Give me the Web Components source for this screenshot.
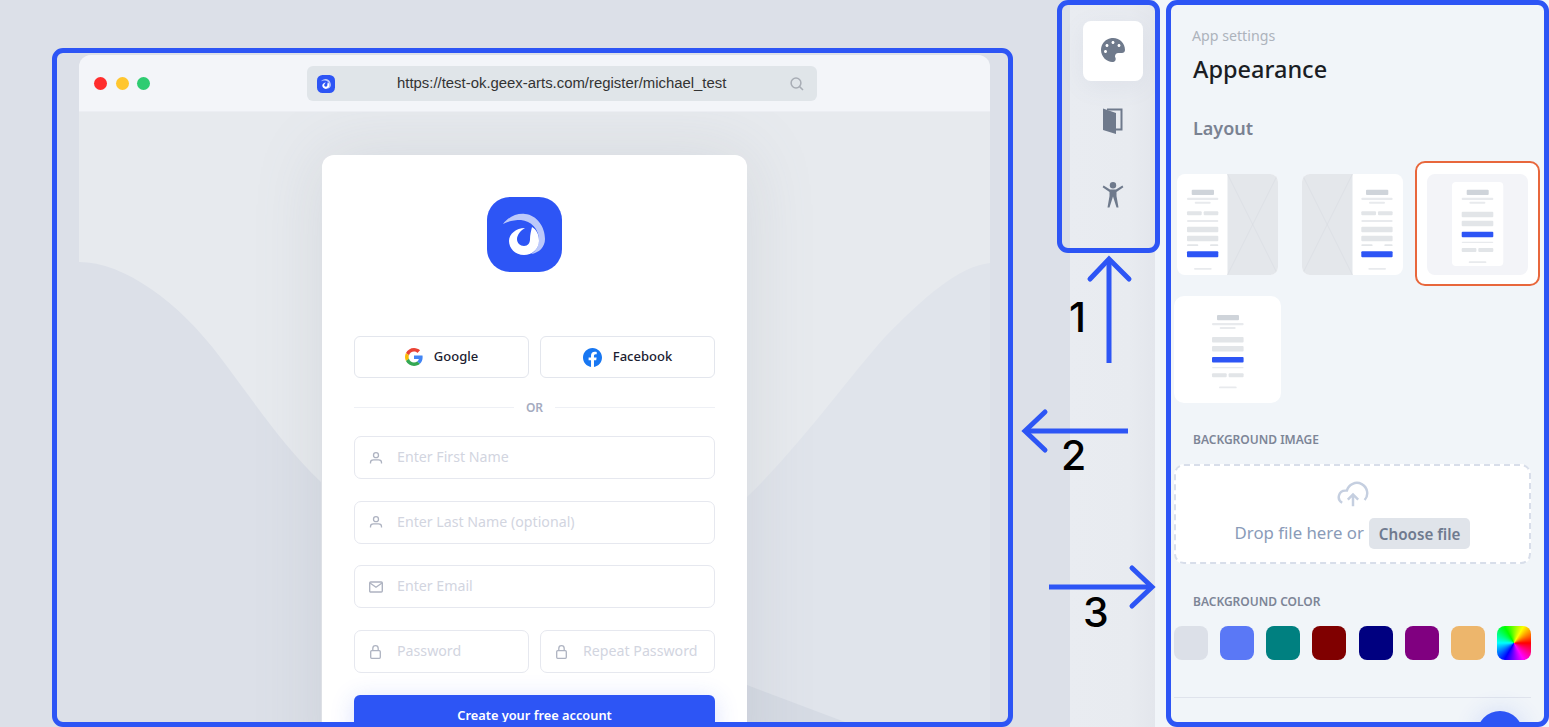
<!DOCTYPE html>
<html>
<head>
<meta charset="utf-8">
<title>Appearance settings</title>
<style>
  html, body { margin: 0; height: 100%; }
  body {
    overflow: hidden;
    position: relative;
    display: flex;
    height: 727px;
    font-family: "Noto Sans", sans-serif;
  }
</style>
</head>
<body>
<preview-stage>
  <browser-window url="https://test-ok.geex-arts.com/register/michael_test">
    <register-card></register-card>
  </browser-window>
</preview-stage>
<side-rail></side-rail>
<settings-panel></settings-panel>
<annotation-layer></annotation-layer>

<script>
const ICONS = {
  user: '<svg width="14" height="14" viewBox="0 0 14 14" fill="none" stroke="currentColor" stroke-width="1.3"><circle cx="7" cy="4.2" r="2.5"/><path d="M1.5 12.6v-1.1c0-1.6 1.6-2.6 3-2.6h5c1.4 0 3 1 3 2.6v1.1"/></svg>',
  mail: '<svg width="14" height="12" viewBox="0 0 14 12" fill="none" stroke="currentColor" stroke-width="1.4"><rect x=".7" y="1" width="12.6" height="10" rx="1"/><path d="M1 2l6 4.2L13 2"/></svg>',
  lock: '<svg width="11" height="14" viewBox="0 0 11 14" fill="none" stroke="currentColor" stroke-width="1.3"><rect x=".7" y="5.7" width="9.6" height="7.6" rx="1"/><path d="M2.8 5.7V3.4a2.7 2.7 0 015.4 0v2.3"/></svg>',
  google: '<svg width="18" height="18" viewBox="0 0 48 48"><path fill="#EA4335" d="M24 9.5c3.5 0 6.7 1.2 9.2 3.6l6.9-6.9C35.9 2.4 30.5 0 24 0 14.6 0 6.5 5.4 2.6 13.2l8 6.2C12.4 13.7 17.700 9.500 24 9.500z"/><path fill="#4285F4" d="M47 24.600c0-1.600-.1-3.100-.4-4.600H24v9.100h12.900c-.6 3-2.300 5.500-4.800 7.200l7.700 6C44.300 38 47 31.900 47 24.600z"/><path fill="#FBBC05" d="M10.500 28.600c-.5-1.400-.8-3-.8-4.600s.3-3.200.8-4.600l-8-6.200C.9 16.500 0 20.100 0 24s.9 7.500 2.600 10.800l7.900-6.200z"/><path fill="#34A853" d="M24 48c6.500 0 11.900-2.100 15.900-5.800l-7.700-6c-2.200 1.500-4.900 2.300-8.200 2.300-6.300 0-11.600-4.200-13.500-9.900l-8 6.200C6.500 42.600 14.600 48 24 48z"/></svg>',
  facebook: '<svg width="19" height="19" viewBox="0 0 24 24"><path fill="#1877F2" d="M24 12.070C24 5.400 18.630 0 12 0S0 5.400 0 12.070c0 6.030 4.390 11.020 10.130 11.930v-8.440H7.080v-3.490h3.050V9.410c0-3.020 1.790-4.690 4.530-4.690 1.310 0 2.680.24 2.680.24v2.970h-1.510c-1.490 0-1.960.93-1.960 1.880v2.260h3.330l-.53 3.490h-2.800V24C19.610 23.090 24 18.100 24 12.070z"/></svg>'
};

class SwirlLogo extends HTMLElement {
  connectedCallback() {
    const size = this.getAttribute("size") || 75;
    this.attachShadow({ mode: "open" }).innerHTML = `
      <style>:host { display: block; line-height: 0; }</style>
      <svg width="${size}" height="${size}" viewBox="0 0 75 75">
        <rect width="75" height="75" rx="23" fill="#2d55f5"/>
        <path fill="#bcc9fa" d="M16 27C21 20 30 16 38 17c12 1 20 13 20 25 0 8-6 14-14 15 5-3 8-8 8-14 0-11-8-19-18-20-7 0-13 1-18 4z"/>
        <path fill="#fff" d="M45 30c5 3 7 8 7 14 0 8-7 14-15 14-9 0-15-7-15-14 0-7 7-13 16-13-4 2-8 7-8 11 0 4 3 7 7 7 4 0 6-3 6-7 0-4 1-8 2-12z"/>
      </svg>`;
  }
}

class PreviewStage extends HTMLElement {
  constructor() {
    super();
    this.attachShadow({ mode: "open" }).innerHTML = `
      <style>
        :host {
          display: block;
          flex: 0 0 1070px;
          box-sizing: border-box;
          height: 727px;
          padding: 55px 80px 0 79px;
          background: #dce0e8;
        }
      </style>
      <slot></slot>`;
  }
}

class BrowserWindow extends HTMLElement {
  connectedCallback() {
    this.attachShadow({ mode: "open" }).innerHTML = `
      <style>
        :host {
          display: flex;
          flex-direction: column;
          height: 672px;
          border-radius: 12px 12px 0 0;
          overflow: hidden;
          background: #e7eaee;
        }
        .bar {
          flex: 0 0 57px;
          box-sizing: border-box;
          display: flex;
          align-items: flex-start;
          padding: 11px 15px 0;
          background: #f3f5f9;
          border-bottom: 1px solid #eceef3;
        }
        .dots { display: flex; gap: 8.500px; margin-top: 10.500px; }
        .dots i { width: 13px; height: 13px; border-radius: 50%; display: block; }
        .url {
          margin-left: 157px;
          width: 510px;
          height: 35px;
          box-sizing: border-box;
          display: flex;
          align-items: center;
          padding: 0 13px 0 10px;
          border-radius: 6px;
          background: #e0e5e9;
          font: 14.900px/20px "Liberation Sans", sans-serif;
          color: #333;
        }
        .url span { margin-left: 62px; flex: 1; padding-bottom: 1px; }
        .body {
          position: relative;
          flex: 1;
          display: flex;
          justify-content: center;
          padding-top: 43px;
          overflow: hidden;
        }
        .waves { position: absolute; left: 0; top: 0; }
        ::slotted(*) { position: relative; }
      </style>
      <div class="bar">
        <div class="dots">
          <i style="background:#ff2d2d"></i><i style="background:#ffc62e"></i><i style="background:#2ecc71"></i>
        </div>
        <div class="url">
          <swirl-logo size="18"></swirl-logo>
          <span>${this.getAttribute("url")}</span>
          <svg width="14" height="14" viewBox="0 0 14 14" fill="none" stroke="#a8adb5" stroke-width="1.5"><circle cx="6" cy="6" r="4.900"/><path d="M9.600 9.600L13 13"/></svg>
        </div>
      </div>
      <div class="body">
        <svg class="waves" width="911" height="615" viewBox="0 0 911 615">
          <path fill="#dce0e8" d="M0 150C45 150 100 190 141 245c34 45 64 90 101 125v245H0z"/>
          <path fill="#e0e4eb" d="M911 151c-31 3-66 34-105 74-36 40-86 110-138 160v230h243z"/>
          <path fill="#d6dbe4" d="M668 573l98 37v5h-98z"/>
        </svg>
        <slot></slot>
      </div>`;
  }
}

class SocialButton extends HTMLElement {
  connectedCallback() {
    this.attachShadow({ mode: "open" }).innerHTML = `
      <style>
        :host {
          flex: 1 1 0;
          height: 42px;
          box-sizing: border-box;
          display: flex;
          align-items: center;
          justify-content: center;
          gap: 11px;
          background: #fff;
          border: 1px solid #e3e6ed;
          border-radius: 6px;
          font-size: 13px;
          font-weight: 500;
          color: #1b2030;
        }
        svg { display: block; }
        .label { margin-bottom: 2px; }
      </style>
      ${ICONS[this.getAttribute("icon")]}<span class="label"><slot></slot></span>`;
  }
}

class FormField extends HTMLElement {
  connectedCallback() {
    this.attachShadow({ mode: "open" }).innerHTML = `
      <style>
        :host {
          flex: 1 1 0;
          min-width: 0;
          height: 43px;
          box-sizing: border-box;
          display: flex;
          align-items: center;
          background: #fff;
          border: 1px solid #e6e8ef;
          border-radius: 7px;
          padding-left: 13px;
          font-size: 14.200px;
          color: #d2d5df;
          white-space: nowrap;
        }
        .icon { width: 15px; margin-right: 14px; color: #aeb3c1; display: flex; justify-content: center; }
        .label { margin-bottom: 2px; }
      </style>
      <span class="icon">${ICONS[this.getAttribute("icon")]}</span><span class="label"><slot></slot></span>`;
  }
}

class RegisterCard extends HTMLElement {
  constructor() {
    super();
    this.attachShadow({ mode: "open" }).innerHTML = `
      <style>
        :host {
          display: block;
          width: 425px;
          height: 640px;
          box-sizing: border-box;
          padding: 42px 32px 0;
          background: #fff;
          border-radius: 12px 12px 0 0;
          box-shadow: 0 0 70px rgba(120, 125, 135, .16);
          position: relative;
        }
        swirl-logo { width: 75px; margin: 0 0 64px 133px; }
        .row { display: flex; gap: 11px; }
        .or {
          display: flex;
          align-items: center;
          gap: 12px;
          height: 20px;
          margin: 19px 0;
          font-size: 12px;
          font-weight: 600;
          color: #a5abc0;
        }
        .or::before, .or::after { content: ""; flex: 1; height: 1px; background: #eef0f5; }
        .fields { display: flex; flex-direction: column; gap: 21.700px; }
        .fields > form-field { flex: none; }
        .submit {
          margin-top: 21.700px;
          height: 40px;
          border-radius: 6px;
          background: #2d55f5;
          box-shadow: 0 4px 24px rgba(45, 85, 245, .18);
          color: #fff;
          font-size: 12.800px;
          font-weight: 600;
          display: flex;
          align-items: center;
          justify-content: center;
        }
      </style>
      <swirl-logo size="75"></swirl-logo>
      <div class="row">
        <social-button icon="google">Google</social-button>
        <social-button icon="facebook">Facebook</social-button>
      </div>
      <div class="or">OR</div>
      <div class="fields">
        <form-field icon="user">Enter First Name</form-field>
        <form-field icon="user">Enter Last Name (optional)</form-field>
        <form-field icon="mail">Enter Email</form-field>
        <div class="row">
          <form-field icon="lock">Password</form-field>
          <form-field icon="lock">Repeat Password</form-field>
        </div>
      </div>
      <div class="submit">Create your free account</div>`;
  }
}

class SideRail extends HTMLElement {
  constructor() {
    super();
    this.attachShadow({ mode: "open" }).innerHTML = `
      <style>
        :host {
          flex: 0 0 85px;
          box-sizing: border-box;
          display: flex;
          flex-direction: column;
          gap: 12px;
          padding: 21px 12px 0 13px;
          background: linear-gradient(90deg, #e9ecf1, #e8ebf0 70%, #e3e6ec);
        }
        .item {
          height: 60px;
          display: flex;
          align-items: center;
          justify-content: center;
          border-radius: 8px;
        }
        .item.on { background: #fff; box-shadow: 0 6px 24px rgba(120, 130, 160, .08); }
        svg { display: block; }
      </style>
      <div class="item on">
        <svg style="margin-bottom:2px" width="24" height="24" viewBox="0 0 512 512" fill="#6f7a8c"><path d="M204.300 5C104.900 24.400 24.800 104.300 5.200 203.400c-37 187 131.700 326.400 258.800 306.700 41.200-6.400 61.400-54.600 42.500-91.700-23.100-45.400 9.900-98.400 60.900-98.400h79.700c35.800 0 64.800-29.600 64.900-65.300C511.500 97.100 368.100-26.900 204.300 5zM96 320c-17.700 0-32-14.300-32-32s14.300-32 32-32 32 14.300 32 32-14.300 32-32 32zm32-128c-17.700 0-32-14.300-32-32s14.300-32 32-32 32 14.300 32 32-14.300 32-32 32zm128-64c-17.700 0-32-14.300-32-32s14.300-32 32-32 32 14.300 32 32-14.300 32-32 32zm128 64c-17.700 0-32-14.300-32-32s14.300-32 32-32 32 14.300 32 32-14.300 32-32 32z"/></svg>
      </div>
      <div class="item">
        <svg style="margin-bottom:4px" width="20" height="26" viewBox="0 0 20 26" fill="#6f7a8c"><path d="M0 .5h19.500v22H13v-2h4.500V2.500H4V.5z"/><path d="M0 .5l13 4.500v21L0 22z"/></svg>
      </div>
      <div class="item">
        <svg width="22" height="26" viewBox="0 0 22 26" fill="#6f7a8c"><circle cx="11" cy="3.200" r="3.200"/><path d="M.6 5.200l1-1.600L8 7.400h6l6.400-3.800 1 1.600L14.500 10v4l2 11.500h-2L11 14.500 7.500 25.500h-2l2-11.500v-4z"/></svg>
      </div>`;
  }
}

function bar(x1, x2, y1, y2, fill) {
  return `<rect x="${x1}" y="${y1}" width="${x2 - x1}" height="${y2 - y1}" rx="1" fill="${fill}"/>`;
}
const HEAD = "#cfd4da", LINE = "#e8eaed", BOX = "#e2e5e8", BLUE = "#2d55f5";

// wireframe with the form next to a picture
function sideForm(d) {
  return bar(14.7 + d, 37 + d, 15.7, 21, HEAD) +
    bar(10 + d, 41.3 + d, 23.7, 26, LINE) + bar(17.7 + d, 33.7 + d, 27.7, 29.7, LINE) +
    bar(10 + d, 24.7 + d, 37.3, 41.3, BOX) + bar(26.7 + d, 41.3 + d, 37.3, 41.3, BOX) +
    bar(10 + d, 41.3 + d, 46, 48, LINE) +
    bar(10 + d, 41.3 + d, 52.7, 58.3, BOX) + bar(10 + d, 41.3 + d, 61.7, 67.3, BOX) +
    bar(10 + d, 21.3 + d, 70.3, 72, BOX) + bar(33 + d, 41.3 + d, 70.3, 72, BOX) +
    bar(10 + d, 41.3 + d, 77.3, 83.3, BLUE) +
    bar(17 + d, 34.7 + d, 94, 95.7, LINE);
}
// wireframe with a centred form, d and e shift it
function centerForm(d, e) {
  return bar(5 + d, 27 + d, 15.7 + e, 21 + e, HEAD) +
    bar(d, 31.6 + d, 23.7 + e, 26 + e, LINE) + bar(7.7 + d, 23.7 + d, 27.7 + e, 29.7 + e, LINE) +
    bar(d, 31.6 + d, 37.7 + e, 43.3 + e, BOX) + bar(d, 31.6 + d, 46.7 + e, 52.3 + e, BOX) +
    bar(d, 31.6 + d, 57.7 + e, 63.3 + e, BLUE) +
    bar(d, 31.6 + d, 67.7 + e, 69 + e, LINE) +
    bar(d, 14.7 + d, 74 + e, 78 + e, BOX) + bar(16.6 + d, 31.6 + d, 74 + e, 78 + e, BOX) +
    bar(7 + d, 24.700 + d, 87.3 + e, 89 + e, LINE);
}
function photo(x) {
  return `<rect x="${x}" width="50.500" height="101" fill="#e4e7eb"/>` +
    `<path d="M${x} 0L${x + 50.500} 101M${x + 50.500} 0L${x} 101" stroke="#d9dce1" stroke-width=".6"/>`;
}

class LayoutThumb extends HTMLElement {
  connectedCallback() {
    const kind = this.getAttribute("kind");
    const big = kind === "plain";
    let art = "";
    if (kind === "left") art = photo(50.500) + sideForm(0);
    if (kind === "right") art = photo(0) + sideForm(49.300);
    if (kind === "boxed") art = `<rect width="101" height="101" fill="#f3f4f8"/><rect x="25" y="8" width="51.300" height="84" rx="4" fill="#fff"/>` + centerForm(34.700, 0);
    if (kind === "plain") art = centerForm(38, 3.300);
    const size = big ? 107 : 101;
    this.attachShadow({ mode: "open" }).innerHTML = `
      <style>
        :host {
          display: flex;
          align-items: center;
          justify-content: center;
          width: 125px;
          height: 125px;
          box-sizing: border-box;
          border-radius: 10px;
        }
        :host([selected]) { background: #fff; border: 2px solid #e8673c; }
        svg { display: block; margin-top: ${big ? 0 : 2}px; border-radius: ${big ? 10 : 8}px; background: #fff; }
      </style>
      <svg width="${size}" height="${size}" viewBox="0 0 ${size} ${size}">${art}</svg>`;
  }
}

class ColorSwatch extends HTMLElement {
  constructor() {
    super();
    this.attachShadow({ mode: "open" }).innerHTML = `
      <style>
        :host { display: block; width: 34px; height: 34px; border-radius: 8px; background: var(--swatch); }
      </style>`;
  }
  connectedCallback() {
    this.style.setProperty("--swatch", this.getAttribute("color"));
  }
}

class SettingsPanel extends HTMLElement {
  constructor() {
    super();
    this.attachShadow({ mode: "open" }).innerHTML = `
      <style>
        :host {
          flex: 0 0 394px;
          box-sizing: border-box;
          display: flex;
          flex-direction: column;
          height: 727px;
          padding-top: 26px;
          background: #f1f5f9;
          overflow: hidden;
        }
        .sup { padding-left: 37px; font-size: 14.200px; line-height: 20px; color: #adb3bc; }
        h1 { margin: 7px 0 0; padding-left: 38px; font-size: 23.500px; line-height: 32px; font-weight: 500; color: #1a1d24; }
        h2 { margin: 30px 0 0; padding-left: 38px; font-size: 18px; line-height: 26px; font-weight: 600; color: #7a8292; }
        .layouts { display: grid; grid-template-columns: repeat(3, 125px); row-gap: 1px; margin: 20px 0 0 10px; }
        h3 { margin: 0; padding-left: 38px; font-size: 12px; line-height: 20px; font-weight: 600; color: #7d8597; text-transform: uppercase; }
        .drop {
          margin: 14px 18px 0 19px;
          height: 100px;
          box-sizing: border-box;
          display: flex;
          flex-direction: column;
          align-items: center;
          padding-top: 13px;
          background: #fff;
          border: 2px dashed #d8deea;
          border-radius: 10px;
        }
        .drop svg { display: block; transform: scaleX(-1); }
        .line { display: flex; align-items: center; gap: 5px; margin-top: 8px; font-size: 16.800px; color: #8a9bb8; }
        .line em { font-style: normal; padding-bottom: 2px; }
        .choose { padding: 0 10px; height: 31px; display: flex; align-items: center; border-radius: 5px; background: #e0e4ea; font-size: 15.200px; font-weight: 600; color: #6f7a8f; }
        .swatches { display: flex; justify-content: space-between; margin: 14px 18px 0 19px; }
        .rule { margin: 37px 18px 0 19px; height: 1px; background: #dfe3ec; flex: none; }
      </style>
      <div class="sup">App settings</div>
      <h1>Appearance</h1>
      <h2>Layout</h2>
      <div class="layouts">
        <layout-thumb kind="left"></layout-thumb>
        <layout-thumb kind="right"></layout-thumb>
        <layout-thumb kind="boxed" selected></layout-thumb>
        <layout-thumb kind="plain"></layout-thumb>
      </div>
      <h3 style="margin-top:18px">Background image</h3>
      <div class="drop">
        <svg width="32" height="31" viewBox="0 0 24 24" fill="none" stroke="#c5cfe0" stroke-width="1.900"><path d="M16 16l-4-4-4 4M12 12v9"/><path d="M20.390 18.390A5 5 0 0018 9h-1.260A8 8 0 103 16.300"/></svg>
        <div class="line"><em>Drop file here or</em> <span class="choose">Choose file</span></div>
      </div>
      <h3 style="margin-top:28px">Background color</h3>
      <div class="swatches">
        <color-swatch color="#dce0e8"></color-swatch>
        <color-swatch color="#5a78f6"></color-swatch>
        <color-swatch color="#008080"></color-swatch>
        <color-swatch color="#800000"></color-swatch>
        <color-swatch color="#000080"></color-swatch>
        <color-swatch color="#800080"></color-swatch>
        <color-swatch color="#edb66c"></color-swatch>
        <color-swatch color="conic-gradient(from 30deg, #ff0, #f00, #f0f, #00f, #0ff, #0f0, #ff0)"></color-swatch>
      </div>
      <div class="rule"></div>`;
  }
}

// the blue frames, arrows and numbers drawn on top of the screenshot
class AnnotationLayer extends HTMLElement {
  constructor() {
    super();
    this.attachShadow({ mode: "open" }).innerHTML = `
      <style>
        :host { position: absolute; left: 0; top: 0; width: 1549px; height: 727px; pointer-events: none; }
        .frame { position: absolute; box-sizing: border-box; border: 5px solid #2d55f5; border-radius: 11px; }
        .fab { position: absolute; left: 1477px; top: 711px; width: 46px; height: 46px; border-radius: 50%; background: #2d55f5; box-shadow: 0 0 24px rgba(45, 85, 245, .16); }
        svg { position: absolute; left: 0; top: 0; }
        b { position: absolute; font: 500 41px/41px Inter, sans-serif; color: #000; }
      </style>
      <div class="fab"></div>
      <div class="frame" style="left:52px;top:48px;width:961px;height:679px"></div>
      <div class="frame" style="left:1057px;top:0;width:103px;height:253px"></div>
      <div class="frame" style="left:1166px;top:0;width:383px;height:727px"></div>
      <svg width="1549" height="727" fill="none" stroke="#2d55f5" stroke-width="5">
        <path d="M1109 363V260"/><path d="M1090 279l19-20 20 20" stroke-linecap="round"/>
        <path d="M1128 431H1025"/><path d="M1045 412l-20 19 20 19" stroke-linecap="round"/>
        <path d="M1049 587h103"/><path d="M1132 568l20 19-20 19" stroke-linecap="round"/>
      </svg>
      <b style="left:1069px;top:297px">1</b>
      <b style="left:1061px;top:435px">2</b>
      <b style="left:1083px;top:592px">3</b>`;
  }
}

customElements.define("swirl-logo", SwirlLogo);
customElements.define("preview-stage", PreviewStage);
customElements.define("browser-window", BrowserWindow);
customElements.define("social-button", SocialButton);
customElements.define("form-field", FormField);
customElements.define("register-card", RegisterCard);
customElements.define("side-rail", SideRail);
customElements.define("layout-thumb", LayoutThumb);
customElements.define("color-swatch", ColorSwatch);
customElements.define("settings-panel", SettingsPanel);
customElements.define("annotation-layer", AnnotationLayer);
</script>
</body>
</html>
